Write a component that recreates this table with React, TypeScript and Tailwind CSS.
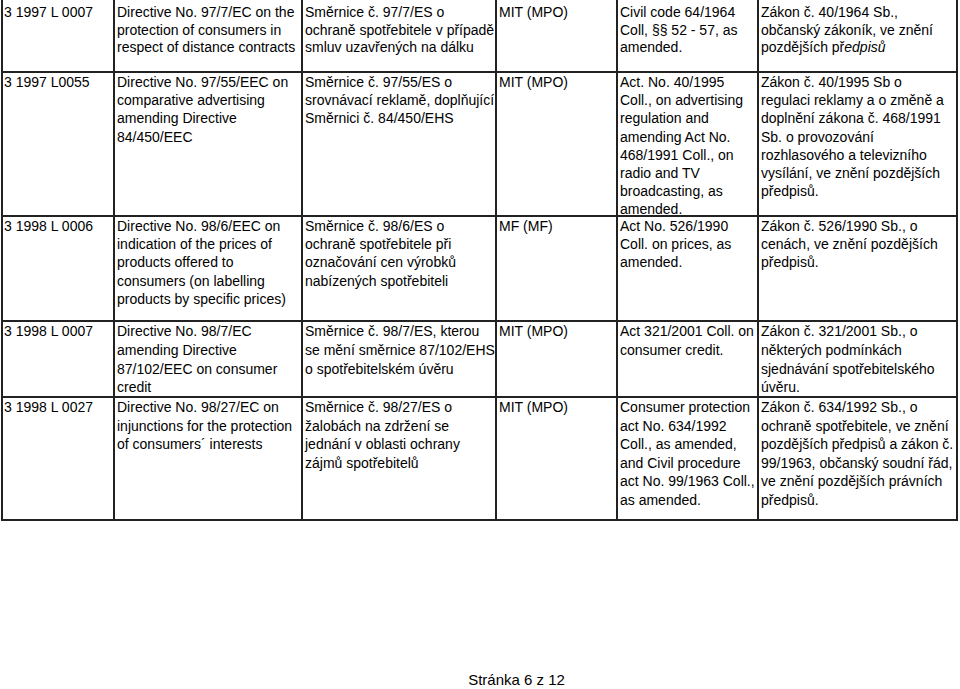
import type { ReactNode } from "react";

type Row = {
  height: string;
  pad: string;
  leading: string;
  cells: ReactNode[][];
};

const widths = ["w-[112px]", "w-[188px]", "w-[194px]", "w-[121px]", "w-[141px]", "w-[199px]"];

const rows: Row[] = [
  {
    height: "h-[73px]",
    pad: "pt-[4px]",
    leading: "leading-[17.5px]",
    cells: [
      ["3 1997 L 0007"],
      ["Directive No. 97/7/EC on the", "protection of consumers in", "respect of distance contracts"],
      ["Směrnice č. 97/7/ES o", "ochraně spotřebitele v případě", "smluv uzavřených na dálku"],
      ["MIT (MPO)"],
      ["Civil code 64/1964", "Coll, §§ 52 - 57, as", "amended."],
      [
        "Zákon č. 40/1964 Sb.,",
        "občanský zákoník, ve znění",
        <>
          pozdějších př<i>edpisů</i>
        </>,
      ],
    ],
  },
  {
    height: "h-[144px]",
    pad: "pt-0",
    leading: "leading-[18.2px]",
    cells: [
      ["3 1997 L0055"],
      ["Directive No. 97/55/EEC on", "comparative advertising", "amending Directive", "84/450/EEC"],
      ["Směrnice č. 97/55/ES o", "srovnávací reklamě, doplňující", "Směrnici č. 84/450/EHS"],
      ["MIT (MPO)"],
      [
        "Act. No. 40/1995",
        "Coll., on advertising",
        "regulation and",
        "amending Act No.",
        "468/1991 Coll., on",
        "radio and TV",
        "broadcasting, as",
        "amended.",
      ],
      [
        "Zákon č. 40/1995 Sb o",
        "regulaci reklamy a o změně a",
        "doplnění zákona č. 468/1991",
        "Sb. o provozování",
        "rozhlasového a televizního",
        "vysílání, ve znění pozdějších",
        "předpisů.",
      ],
    ],
  },
  {
    height: "h-[105px]",
    pad: "pt-0",
    leading: "leading-[18.2px]",
    cells: [
      ["3 1998 L 0006"],
      [
        "Directive No. 98/6/EEC on",
        "indication of the prices of",
        "products offered to",
        "consumers (on labelling",
        "products by specific prices)",
      ],
      ["Směrnice č. 98/6/ES o", "ochraně spotřebitele při", "označování cen výrobků", "nabízených spotřebiteli"],
      ["MF (MF)"],
      ["Act No. 526/1990", "Coll. on prices, as", "amended."],
      ["Zákon č. 526/1990 Sb., o", "cenách, ve znění pozdějších", "předpisů."],
    ],
  },
  {
    height: "h-[76px]",
    pad: "pt-0",
    leading: "leading-[18.8px]",
    cells: [
      ["3 1998 L 0007"],
      ["Directive No. 98/7/EC", "amending Directive", "87/102/EEC on consumer", "credit"],
      ["Směrnice č. 98/7/ES, kterou", "se mění směrnice 87/102/EHS", "o spotřebitelském úvěru"],
      ["MIT (MPO)"],
      ["Act 321/2001 Coll. on", "consumer credit."],
      ["Zákon č. 321/2001 Sb., o", "některých podmínkách", "sjednávání spotřebitelského", "úvěru."],
    ],
  },
  {
    height: "h-[123px]",
    pad: "pt-0",
    leading: "leading-[18.6px]",
    cells: [
      ["3 1998 L 0027"],
      ["Directive No. 98/27/EC on", "injunctions for the protection", "of consumers´ interests"],
      ["Směrnice č. 98/27/ES o", "žalobách na zdržení se", "jednání v oblasti ochrany", "zájmů spotřebitelů"],
      ["MIT (MPO)"],
      [
        "Consumer protection",
        "act No. 634/1992",
        "Coll., as amended,",
        "and Civil procedure",
        "act No. 99/1963 Coll.,",
        "as amended.",
      ],
      [
        "Zákon č. 634/1992 Sb., o",
        "ochraně spotřebitele, ve znění",
        "pozdějších předpisů a zákon č.",
        "99/1963, občanský soudní řád,",
        "ve znění pozdějších právních",
        "předpisů.",
      ],
    ],
  },
];

export default function App() {
  return (
    <div className="w-[960px] h-[689px] overflow-hidden bg-white text-black font-['Liberation_Sans',Arial,sans-serif]">
      {/* table continues from previous page, so no top rule */}
      <div className="ml-[1px] w-[957px] border-l-2 border-[#222]">
        {rows.map((row, ri) => (
          <div key={ri} className={`flex border-b-2 border-[#222] ${row.height}`}>
            {row.cells.map((lines, ci) => (
              <div
                key={ci}
                className={`${widths[ci]} shrink-0 border-r-2 border-[#222] text-[14px] ${row.leading} ${row.pad} ${
                  ci === 0 ? "pl-[1px]" : "pl-[2px]"
                }`}
              >
                {lines.map((line, li) => (
                  <span key={li} className="block whitespace-nowrap">
                    {line}
                  </span>
                ))}
              </div>
            ))}
          </div>
        ))}
      </div>

      <div className="mt-[150px] pl-[73px] text-center text-[15px] leading-[18px]">Stránka 6 z 12</div>
    </div>
  );
}
